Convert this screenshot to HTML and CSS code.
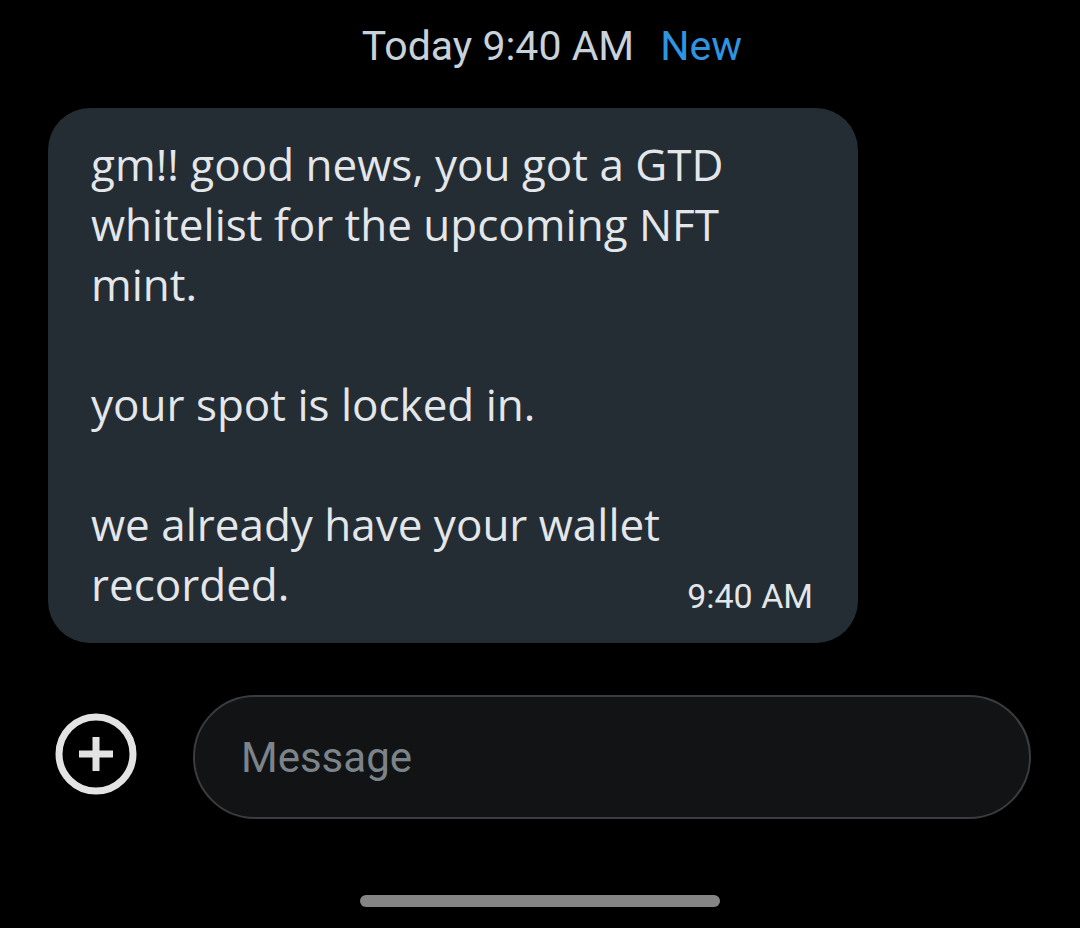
FILE: index.html
```html
<!DOCTYPE html>
<html lang="en">
<head>
  <meta charset="UTF-8">
  <meta name="viewport" content="width=device-width, initial-scale=1.0">
  <title>Messages</title>
  <link rel="stylesheet" href="styles.css">
</head>
<body>

<div class="chat">
  <div class="day-header">
    <span class="day-time">Today 9:40 AM</span>
    <span class="day-new">New</span>
  </div>

  <div class="bubble">
    <div class="bubble-text">gm!! good news, you got a GTD<br>whitelist for the upcoming NFT<br>mint.<br><br>your spot is locked in.<br><br>we already have your wallet<br>recorded.</div>
    <div class="bubble-time">9:40 AM</div>
  </div>

  <div class="composer">
    <button class="add-btn" aria-label="Add">
      <svg width="82" height="82" viewBox="0 0 82 82">
        <circle cx="41" cy="41" r="37" fill="none" stroke="#e3e3e3" stroke-width="7"/>
        <path d="M41 24v34M24 41h34" stroke="#e3e3e3" stroke-width="7"/>
      </svg>
    </button>
    <div class="message-input">Message</div>
  </div>

  <div class="home-bar"></div>
</div>

</body>
</html>
```

FILE: styles.css
```css
body {
  margin: 0;
  background-color: #000;
  font-family: Roboto, "Liberation Sans", sans-serif;
}
.chat {
  width: 1080px;
  height: 928px;
  display: flex;
  flex-direction: column;
}
.day-header {
  padding-top: 23px;
  padding-left: 24px;
  text-align: center;
  font-size: 41px;
  line-height: 1.15;
  white-space: nowrap;
}
.day-time {
  color: #c9d2da;
}
.day-new {
  color: #2f95e0;
  margin-left: 16px;
}
.bubble {
  margin: 38px 0 0 48px;
  width: 810px;
  box-sizing: border-box;
  padding: 26px 45px 29px 43px;
  background: #242c34;
  border-radius: 42px;
  display: flex;
}
.bubble-text {
  flex: 1;
  min-width: 0;
  font-family: "Open Sans", "Noto Sans", sans-serif;
  font-size: 44px;
  line-height: 60px;
  color: #e4e7ea;
  white-space: nowrap;
}
.bubble-time {
  align-self: flex-end;
  flex-shrink: 0;
  margin-bottom: -2px;
  font-size: 34px;
  line-height: 40px;
  color: #e4e7ea;
  white-space: nowrap;
}
.composer {
  margin-top: 52px;
  display: flex;
  align-items: center;
  padding: 0 49px 0 55px;
  gap: 56px;
}
.add-btn {
  padding: 0;
  border: none;
  background: none;
  width: 82px;
  height: 82px;
  margin-top: -6px;
}
.message-input {
  flex: 1;
  height: 124px;
  box-sizing: border-box;
  border: 2px solid #3a3c3f;
  border-radius: 62px;
  background: #121314;
  padding-left: 46px;
  display: flex;
  align-items: center;
  font-size: 42px;
  color: #7c848b;
}
.home-bar {
  margin: 76px auto 0;
  width: 360px;
  height: 12px;
  border-radius: 6px;
  background: #858585;
}
```
